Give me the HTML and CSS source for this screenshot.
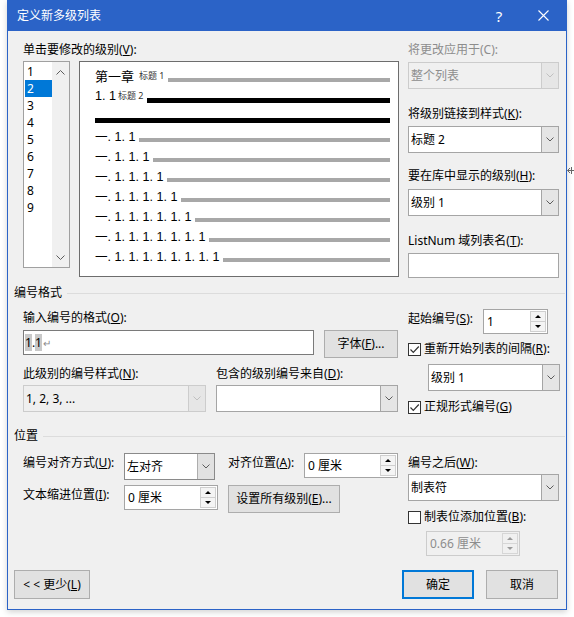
FILE: index.html
```html
<!DOCTYPE html>
<html lang="zh-CN">
<head>
<meta charset="utf-8">
<title>定义新多级列表</title>
<link rel="stylesheet" href="styles.css">
</head>
<body>
<div class="page">
  <div class="dialog">
    <div class="titlebar">
      <span class="title">定义新多级列表</span>
      <span class="tb-help">?</span>
      <span class="tb-close"><svg width="11" height="11" viewBox="0 0 11 11"><path d="M0.5 0.5 L10.5 10.5 M10.5 0.5 L0.5 10.5" stroke="#fff" stroke-width="1.1" fill="none"/></svg></span>
    </div>
    <div class="body">
      <div class="top">
        <div class="top-left">
          <div class="lbl">单击要修改的级别(<u>V</u>):</div>
          <div class="levels-row">
            <div class="levels">
              <ul class="level-list">
                <li>1</li><li class="sel">2</li><li>3</li><li>4</li><li>5</li><li>6</li><li>7</li><li>8</li><li>9</li>
              </ul>
              <div class="vscroll">
                <svg class="chev" width="9" height="5" viewBox="0 0 9 5"><path d="M0.5 4.5 L4.5 0.5 L8.5 4.5" fill="none" stroke="#c4c4c4"/></svg>
                <svg class="chev" width="9" height="5" viewBox="0 0 9 5"><path d="M0.5 0.5 L4.5 4.5 L8.5 0.5" fill="none" stroke="#c4c4c4"/></svg>
              </div>
            </div>
            <div class="preview">
              <div class="pv-row r1"><span class="pv-head">第一章</span><span class="pv-sty">标题 1</span><span class="bar gray"></span></div>
              <div class="pv-row r2"><span class="pv-num">1. 1</span><span class="pv-sty">标题 2</span><span class="bar black"></span></div>
              <div class="pv-row r3"><span class="bar black"></span></div>
              <div class="pv-row lv"><span class="pv-num">一. 1. 1</span><span class="bar gray"></span></div>
              <div class="pv-row lv"><span class="pv-num">一. 1. 1. 1</span><span class="bar gray"></span></div>
              <div class="pv-row lv"><span class="pv-num">一. 1. 1. 1. 1</span><span class="bar gray"></span></div>
              <div class="pv-row lv"><span class="pv-num">一. 1. 1. 1. 1. 1</span><span class="bar gray"></span></div>
              <div class="pv-row lv"><span class="pv-num">一. 1. 1. 1. 1. 1. 1</span><span class="bar gray"></span></div>
              <div class="pv-row lv"><span class="pv-num">一. 1. 1. 1. 1. 1. 1. 1</span><span class="bar gray"></span></div>
              <div class="pv-row lv"><span class="pv-num">一. 1. 1. 1. 1. 1. 1. 1. 1</span><span class="bar gray"></span></div>
            </div>
          </div>
        </div>
        <div class="top-right">
          <div class="lbl dis">将更改应用于(C):</div>
          <div class="combo disabled apply-to"><span class="combo-text">整个列表</span><span class="combo-btn"><svg class="chev" width="8" height="5" viewBox="0 0 8 5"><path d="M0.5 0.5 L4 4 L7.5 0.5" fill="none"/></svg></span></div>
          <div class="lbl link-lbl">将级别链接到样式(<u>K</u>):</div>
          <div class="combo link-combo"><span class="combo-text">标题 2</span><span class="combo-btn"><svg class="chev" width="8" height="5" viewBox="0 0 8 5"><path d="M0.5 0.5 L4 4 L7.5 0.5" fill="none"/></svg></span></div>
          <div class="lbl gallery-lbl">要在库中显示的级别(<u>H</u>):</div>
          <div class="combo gallery-combo"><span class="combo-text">级别 1</span><span class="combo-btn"><svg class="chev" width="8" height="5" viewBox="0 0 8 5"><path d="M0.5 0.5 L4 4 L7.5 0.5" fill="none"/></svg></span></div>
          <div class="lbl listnum-lbl">ListNum 域列表名(<u>T</u>):</div>
          <div class="tbox listnum-box"></div>
        </div>
      </div>

      <div class="group group-fmt"><span>编号格式</span><span class="rule"></span></div>

      <div class="fmt">
        <div class="fmt-left">
          <div class="lbl fmt-lbl">输入编号的格式(<u>O</u>):</div>
          <div class="fmt-row">
            <div class="fmt-input"><span class="field">1</span>.<span class="field">1</span><span class="para">↵</span></div>
            <div class="btn btn-font">字体(<u>F</u>)...</div>
          </div>
          <div class="fmt-row2">
            <div class="lbl style-lbl">此级别的编号样式(<u>N</u>):</div>
            <div class="lbl">包含的级别编号来自(<u>D</u>):</div>
          </div>
          <div class="fmt-row3">
            <div class="combo muted style-combo"><span class="combo-text">1, 2, 3, ...</span><span class="combo-btn"><svg class="chev" width="8" height="5" viewBox="0 0 8 5"><path d="M0.5 0.5 L4 4 L7.5 0.5" fill="none"/></svg></span></div>
            <div class="combo include-combo"><span class="combo-text"></span><span class="combo-btn"><svg class="chev" width="8" height="5" viewBox="0 0 8 5"><path d="M0.5 0.5 L4 4 L7.5 0.5" fill="none"/></svg></span></div>
          </div>
        </div>
        <div class="fmt-right">
          <div class="start-row">
            <div class="lbl start-lbl">起始编号(<u>S</u>):</div>
            <div class="spin start-spin"><span class="spin-val">1</span><span class="spin-btns"><span><i class="tri-up"></i></span><span><i class="tri-dn"></i></span></span></div>
          </div>
          <div class="check restart-check"><span class="cb"><svg width="11" height="11" viewBox="0 0 11 11"><path d="M1.5 5.5 L4.3 8.3 L9.8 2.5" fill="none" stroke="#333" stroke-width="1.2"/></svg></span><span>重新开始列表的间隔(<u>R</u>):</span></div>
          <div class="combo restart-combo"><span class="combo-text">级别 1</span><span class="combo-btn"><svg class="chev" width="8" height="5" viewBox="0 0 8 5"><path d="M0.5 0.5 L4 4 L7.5 0.5" fill="none"/></svg></span></div>
          <div class="check legal-check"><span class="cb"><svg width="11" height="11" viewBox="0 0 11 11"><path d="M1.5 5.5 L4.3 8.3 L9.8 2.5" fill="none" stroke="#333" stroke-width="1.2"/></svg></span><span>正规形式编号(<u>G</u>)</span></div>
        </div>
      </div>

      <div class="group group-pos"><span>位置</span><span class="rule"></span></div>

      <div class="pos">
        <div class="pos-left">
          <div class="prow prow1">
            <div class="lbl plabel">编号对齐方式(<u>U</u>):</div>
            <div class="combo align-combo"><span class="combo-text">左对齐</span><span class="combo-btn"><svg class="chev" width="8" height="5" viewBox="0 0 8 5"><path d="M0.5 0.5 L4 4 L7.5 0.5" fill="none"/></svg></span></div>
            <div class="lbl plabel2">对齐位置(<u>A</u>):</div>
            <div class="spin pspin"><span class="spin-val">0 厘米</span><span class="spin-btns"><span><i class="tri-up"></i></span><span><i class="tri-dn"></i></span></span></div>
          </div>
          <div class="prow prow2">
            <div class="lbl plabel">文本缩进位置(<u>I</u>):</div>
            <div class="spin pspin"><span class="spin-val">0 厘米</span><span class="spin-btns"><span><i class="tri-up"></i></span><span><i class="tri-dn"></i></span></span></div>
            <div class="btn btn-all">设置所有级别(<u>E</u>)...</div>
          </div>
        </div>
        <div class="pos-right">
          <div class="lbl after-lbl">编号之后(<u>W</u>):</div>
          <div class="combo after-combo"><span class="combo-text">制表符</span><span class="combo-btn"><svg class="chev" width="8" height="5" viewBox="0 0 8 5"><path d="M0.5 0.5 L4 4 L7.5 0.5" fill="none"/></svg></span></div>
          <div class="check tab-check"><span class="cb"></span><span>制表位添加位置(<u>B</u>):</span></div>
          <div class="spin disabled tab-spin"><span class="spin-val">0.66 厘米</span><span class="spin-btns"><span><i class="tri-up"></i></span><span><i class="tri-dn"></i></span></span></div>
        </div>
      </div>

      <div class="footer">
        <div class="btn btn-less">&lt; &lt; 更少(<u>L</u>)</div>
        <div class="btn btn-ok">确定</div>
        <div class="btn btn-cancel">取消</div>
      </div>
    </div>
  </div>
  <div class="side">
    <svg width="7" height="9" viewBox="0 0 7 9"><path d="M0.5 4.5 H7 M3 2 L0.5 4.5 L3 7 M4.5 1 V8" fill="none" stroke="#666"/></svg>
  </div>
</div>
</body>
</html>
```
FILE: styles.css
```css
* { box-sizing: border-box; }
html, body { margin: 0; padding: 0; }
body {
  width: 574px;
  height: 617px;
  overflow: hidden;
  background: #fff;
  font-family: "Noto Sans", "Noto Sans CJK SC", sans-serif;
  font-size: 12px;
  line-height: 16px;
  color: #000;
}
u { text-decoration: underline; text-underline-offset: 1px; }

.page { display: flex; height: 617px; }

.dialog {
  margin-left: 7px;
  width: 560px;
  height: 610px;
  background: #f0f0f0;
  border: 1px solid #2b63c7;
  border-top: 0;
  display: flex;
  flex-direction: column;
  box-shadow: 0 2px 6px rgba(0, 0, 0, 0.18);
}

.titlebar {
  flex: none;
  height: 31px;
  background: #2b63c7;
  color: #fff;
  display: flex;
  align-items: center;
  padding-left: 9px;
}
.title { flex: 1; font-size: 12px; }
.tb-help { width: 30px; text-align: center; font-size: 15px; margin-right: 7px; }
.tb-close { width: 45px; display: flex; justify-content: center; align-items: center; }

.body { flex: 1; display: flex; flex-direction: column; }

.lbl { height: 16px; white-space: nowrap; }
.dis { color: #8d8d8d; }

/* top section */
.top { display: flex; margin-top: 11px; padding-left: 15px; }
.top-left { width: 376px; }
.levels-row { display: flex; margin-top: 3px; }
.levels {
  width: 47px;
  height: 207px;
  border: 1px solid #a0a0a0;
  background: #fff;
  display: flex;
}
.level-list { list-style: none; margin: 0; padding: 1px 0 0 1px; width: 28px; }
.level-list li { height: 17px; line-height: 17px; padding-left: 2px; }
.level-list li.sel { background: #0078d7; color: #fff; }
.vscroll {
  flex: 1;
  background: #f0f0f0;
  display: flex;
  flex-direction: column;
  justify-content: space-between;
  align-items: center;
  padding: 8px 0 7px;
}

.preview {
  width: 320px;
  height: 216px;
  margin-left: 9px;
  border: 1px solid #6d6d6d;
  background: #fff;
  padding: 4px 8px 0 15px;
}
.pv-row { display: flex; align-items: center; height: 20px; }
.pv-row.r3 { height: 21px; align-items: flex-start; }
.pv-head { font-family: "Noto Sans CJK SC", sans-serif; font-size: 13px; white-space: nowrap; }
.pv-num {
  font-family: "Liberation Sans", "Noto Sans CJK SC", sans-serif;
  font-size: 12.6px;
  white-space: pre;
}
.pv-sty { font-size: 9px; color: #333; white-space: pre; }
.r1 .pv-sty { margin-left: 5px; }
.r2 .pv-sty { margin-left: 2px; }
.bar { flex: 1; margin-left: 3px; }
.bar.gray { height: 4px; background: #a8a8a8; margin-top: 6px; }
.r1 .bar { margin-top: 8px; }
.bar.black { height: 5px; background: #000; }
.r2 .bar { margin-top: 9px; }
.r3 .bar { margin-top: 12px; margin-left: 0; }

.top-right { width: 151px; margin-left: 9px; display: flex; flex-direction: column; }
.apply-to { margin-top: 4px; }
.link-lbl { margin-top: 17px; }
.link-combo { margin-top: 4px; height: 26px; }
.gallery-lbl { margin-top: 15px; }
.gallery-combo { margin-top: 5px; }
.listnum-lbl { margin-top: 17px; }
.listnum-box { margin-top: 4px; }

/* controls */
.combo {
  display: flex;
  height: 27px;
  border: 1px solid #a5a5a5;
  background: #fff;
}
.combo-text {
  flex: 1;
  padding-left: 2px;
  line-height: 25px;
  white-space: nowrap;
  overflow: hidden;
}
.combo-btn {
  width: 17px;
  border-left: 1px solid #a5a5a5;
  background: #e5e5e5;
  display: flex;
  align-items: center;
  justify-content: center;
}
.chev path { stroke: #5c5c5c; }
.combo.disabled { border-color: #cccccc; background: #f0f0f0; color: #8d8d8d; }
.combo.disabled .combo-btn { border-left-color: #cccccc; background: #e6e6e6; }
.combo.disabled .chev path { stroke: #c0c0c0; }
.combo.muted { border-color: #cccccc; background: #efefef; }
.combo.muted .combo-btn { border-left-color: #cccccc; background: #e6e6e6; }
.combo.muted .chev path { stroke: #c0c0c0; }

.tbox { height: 25px; border: 1px solid #a5a5a5; background: #fff; }

.btn {
  height: 28px;
  border: 1px solid #adadad;
  background: #e1e1e1;
  display: flex;
  align-items: center;
  justify-content: center;
  white-space: nowrap;
}

.check { display: flex; align-items: center; height: 16px; white-space: nowrap; }
.cb {
  width: 13px;
  height: 13px;
  border: 1px solid #333;
  background: #fff;
  margin-right: 3px;
  display: flex;
  align-items: center;
  justify-content: center;
}

.spin { display: flex; height: 25px; border: 1px solid #a5a5a5; background: #fff; }
.spin-val { flex: 1; padding-left: 3px; line-height: 23px; white-space: nowrap; }
.spin-btns {
  width: 17px;
  display: flex;
  flex-direction: column;
  padding: 1px 1px 1px 0;
}
.spin-btns > span {
  flex: 1;
  border: 1px solid #cfcfcf;
  background: #f4f4f4;
  display: flex;
  align-items: center;
  justify-content: center;
}
.spin-btns > span + span { border-top: 0; }
.tri-up, .tri-dn {
  width: 0;
  height: 0;
  border-left: 3px solid transparent;
  border-right: 3px solid transparent;
}
.tri-up { border-bottom: 3px solid #000; }
.tri-dn { border-top: 3px solid #000; }
.spin.disabled { border-color: #cccccc; background: #f0f0f0; color: #8d8d8d; }
.spin.disabled .spin-btns > span { border-color: #d6d6d6; background: #f0f0f0; }
.spin.disabled .tri-up { border-bottom-color: #9a9a9a; }
.spin.disabled .tri-dn { border-top-color: #9a9a9a; }

/* groups */
.group { display: flex; align-items: center; height: 16px; padding-left: 6px; }
.group .rule { flex: 1; height: 1px; background: #dcdcdc; margin-left: 5px; margin-right: 1px; }
.group-fmt { margin-top: 7px; }
.group-pos { margin-top: 13px; }

/* number format */
.fmt { display: flex; padding-left: 15px; }
.fmt-left { width: 375px; }
.fmt-lbl { margin-top: 9px; }
.fmt-row { display: flex; align-items: flex-start; margin-top: 4px; }
.fmt-input {
  width: 291px;
  height: 25px;
  border: 1px solid #7a7a7a;
  background: #fff;
  padding-left: 1px;
  line-height: 23px;
  white-space: nowrap;
}
.field { background: #c8c8c8; }
.para { color: #8a8a8a; font-size: 10px; margin-left: 1px; }
.btn-font { width: 74px; margin-left: 10px; }
.fmt-row2 { display: flex; margin-top: 8px; }
.style-lbl { width: 193px; }
.fmt-row3 { display: flex; margin-top: 3px; }
.style-combo { width: 183px; }
.include-combo { width: 182px; margin-left: 10px; }

.fmt-right { width: 152px; margin-left: 10px; display: flex; flex-direction: column; }
.start-row { display: flex; align-items: flex-start; margin-top: 8px; }
.start-lbl { width: 75px; margin-top: 2px; }
.start-spin { width: 65px; }
.restart-check { margin-top: 7px; }
.restart-combo { width: 132px; margin-left: 20px; margin-top: 7px; }
.legal-check { margin-top: 8px; }

/* position */
.pos { display: flex; padding-left: 15px; }
.pos-left { width: 375px; }
.prow { display: flex; align-items: flex-start; }
.prow1 { margin-top: 9px; }
.prow2 { margin-top: 5px; }
.plabel { width: 101px; margin-top: 2px; }
.plabel2 { width: 76px; margin-left: 13px; margin-top: 2px; }
.align-combo { width: 91px; border-color: #8a8a8a; }
.align-combo .combo-btn { background: #e1e1e1; border-left-color: #adadad; }
.pspin { width: 94px; }
.btn-all { width: 112px; margin-left: 10px; }

.pos-right { width: 151px; margin-left: 10px; display: flex; flex-direction: column; }
.after-lbl { margin-top: 11px; }
.after-combo { margin-top: 3px; }
.tab-check { margin-top: 8px; }
.tab-spin { width: 94px; margin-left: 18px; margin-top: 6px; }

/* footer */
.footer { margin-top: auto; display: flex; padding: 0 8px 10px 6px; }
.btn-less { width: 76px; height: 29px; }
.btn-ok { width: 72px; height: 29px; margin-left: auto; border: 2px solid #0078d7; }
.btn-cancel { width: 72px; height: 29px; margin-left: 12px; }

.side { flex: 1; padding-top: 166px; padding-left: 0; }
.side svg { display: block; }
```
